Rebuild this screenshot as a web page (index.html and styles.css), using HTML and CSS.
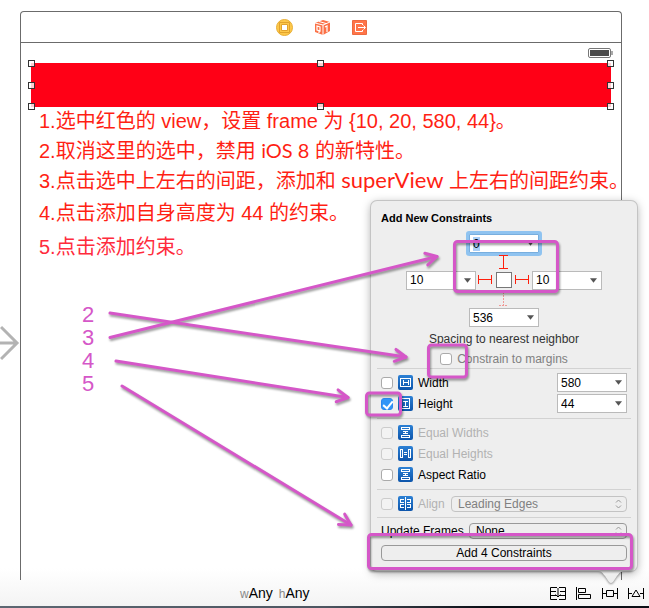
FILE: index.html
```html
<!DOCTYPE html>
<html lang="zh-CN">
<head>
<meta charset="utf-8">
<title>Add New Constraints</title>
<link rel="stylesheet" href="styles.css">
</head>
<body>
<div class="stage">
  <main class="scene">
    <svg class="entry" width="20" height="38" viewBox="0 0 20 38"><path d="M0 19h17M1 3l16 16L1 35"/></svg>
    <header class="dock">
      <svg width="17" height="17" viewBox="0 0 17 17"><circle cx="8.500" cy="8.500" r="8" fill="#fdc84a" stroke="#e8ae35"/><path d="M3.500 3.500h10v10h-10z" fill="#fdc84a" stroke="#e2a32c"/><path d="M5.500 5.500h6v6h-6z" fill="#fff" stroke="#e2a32c"/></svg>
      <svg width="17" height="17" viewBox="0 0 17 17"><path d="M1 4l8-3 7 2v9l-7 4-8-3z" fill="#fb7146"/><path d="M1 4l8 2 7-3M9 6v10M5 2.500l7 2" fill="none" stroke="#fff"/><path d="M3 7v4l3 1V8zM5 11v3M11 8l2-1v6" fill="none" stroke="#fff" stroke-width="1.200"/></svg>
      <svg width="15" height="15" viewBox="0 0 15 15"><path d="M.5.5h14v14H.5z" fill="#ff7448" stroke="#ec6a40"/><path d="M10.500 5V3.500h-7v8h7V10M6 7.500h7M11.500 5.500l2 2-2 2" fill="none" stroke="#fff"/></svg>
    </header>
    <div class="status">
      <svg width="25" height="10" viewBox="0 0 25 10"><rect x=".5" y=".5" width="22" height="9" rx="1.500" fill="#fff" stroke="#777"/><path d="M2 2h19v6H2z" fill="#4b4b4b"/><path d="M23.500 3v4h1V3z" fill="#555"/></svg>
    </div>
    <div class="red-view">
      <i class="handle tl"></i><i class="handle tc"></i><i class="handle tr"></i>
      <i class="handle ml"></i><i class="handle mr"></i>
      <i class="handle bl"></i><i class="handle bc"></i><i class="handle br"></i>
    </div>
    <div class="notes">
      <p>1.选中红色的 view，设置 frame 为 {10, 20, 580, 44}。</p>
      <p>2.取消这里的选中，禁用 <span class="geo">iOS 8</span> 的新特性。</p>
      <p>3.点击选中上左右的间距，添加和 <span class="geo wide">superView</span> 上左右的间距约束。</p>
      <p class="loose">4.点击添加自身高度为 44 的约束。</p>
      <p class="loose pinkish">5.点击添加约束。</p>
    </div>
    <div class="steps"><span>2</span><span>3</span><span>4</span><span>5</span></div>
  </main>

  <footer class="bar">
    <div class="size-class"><small>w</small>Any <small class="h">h</small>Any</div>
    <nav class="tools">
      <button aria-label="Stack"><svg viewBox="0 0 16 13"><path d="M7 .5H.5v12H7M9 .5h6.500v12H9M.5 4.500H6M.5 8.500H6M10 4.500h5.500M10 8.500h5.500M8 1v9M5.500 7.500L8 10l2.500-2.500"/></svg></button>
      <button aria-label="Align"><svg viewBox="0 0 16 13"><path d="M.5 0v13M2.500 1.500h7v4h-7zM2.500 7.500h12v4h-12z"/></svg></button>
      <button aria-label="Pin"><svg viewBox="0 0 16 13"><path d="M.5 1v11M15.500 1v11M4.500 3.500h7v6h-7zM1 6.500h3M12 6.500h3"/></svg></button>
      <button aria-label="Resolve issues"><svg viewBox="0 0 16 13"><path d="M.5 1v11M15.500 1v11M8 3l4 6.500H4zM1 6.500h3M12 6.500h3"/></svg></button>
    </nav>
  </footer>
  <div class="edge"></div>

  <form class="popover">
    <h1>Add New Constraints</h1>
    <div class="spacing">
      <div class="combo focus top"><input aria-label="Top" value="0"><svg viewBox="0 0 8 5"><path d="M0 0h8L4 5z"/></svg></div>
      <svg class="strut up" width="10" height="15" viewBox="0 0 10 15"><path d="M0 .5h9M0 13.500h9M4.500 1v12"/></svg>
      <div class="combo left"><input aria-label="Left" value="10"><svg viewBox="0 0 8 5"><path d="M0 0h8L4 5z"/></svg></div>
      <div class="center">
        <svg class="strut" width="15" height="10" viewBox="0 0 15 10"><path d="M.5 0v9M13.500 0v9M1 4.500h12"/></svg>
        <span class="box"></span>
        <svg class="strut" width="15" height="10" viewBox="0 0 15 10"><path d="M.5 0v9M13.500 0v9M1 4.500h12"/></svg>
      </div>
      <div class="combo right"><input aria-label="Right" value="10"><svg viewBox="0 0 8 5"><path d="M0 0h8L4 5z"/></svg></div>
      <svg class="strut down" width="10" height="15" viewBox="0 0 10 15"><path d="M0 13.500h9M4.500 0v13"/></svg>
      <div class="combo bottom"><input aria-label="Bottom" value="536"><svg viewBox="0 0 8 5"><path d="M0 0h8L4 5z"/></svg></div>
    </div>
    <p class="caption">Spacing to nearest neighbor</p>
    <label class="margins"><input type="checkbox">Constrain to margins</label>
    <hr>
    <section>
      <div class="row"><label><input type="checkbox"><svg class="ico" viewBox="0 0 15 15"><path d="M2.500 3.500h10v8h-10zM5 5v5M10 5v5M5 7.500h5"/></svg>Width</label>
        <div class="combo"><input aria-label="Width value" value="580"><svg viewBox="0 0 8 5"><path d="M0 0h8L4 5z"/></svg></div></div>
      <div class="row"><label><input type="checkbox" checked><svg class="ico" viewBox="0 0 15 15"><path d="M3.500 2.500h8v10h-8zM5 5h5M5 10h5M7.500 5v5"/></svg>Height</label>
        <div class="combo"><input aria-label="Height value" value="44"><svg viewBox="0 0 8 5"><path d="M0 0h8L4 5z"/></svg></div></div>
    </section>
    <hr>
    <section>
      <div class="row"><label class="off"><input type="checkbox" disabled><svg class="ico" viewBox="0 0 15 15"><path d="M3.500 2.500h8v2h-8zM3.500 10.500h8v2h-8zM5 6.500h5M5 8.500h5M7.500 6v3"/></svg>Equal Widths</label></div>
      <div class="row"><label class="off"><input type="checkbox" disabled><svg class="ico" viewBox="0 0 15 15"><path d="M2.500 3.500h2v8h-2zM10.500 3.500h2v8h-2zM6 6.500h3M6 8.500h3"/></svg>Equal Heights</label></div>
      <div class="row"><label><input type="checkbox"><svg class="ico" viewBox="0 0 15 15"><path d="M3.500 2.500h8v2h-8zM3.500 10.500h8v2h-8zM5 6.500h5M5 8.500h5M7.500 6v3"/></svg>Aspect Ratio</label></div>
    </section>
    <hr>
    <section class="single">
      <div class="row"><label class="off"><input type="checkbox" disabled><svg class="ico" viewBox="0 0 15 15"><path d="M7.500 1v13M6 3.500H2.500v3H6M9 3.500h3.500v3H9M6 8.500H2.500v3H6M9 8.500h3.500v3H9"/></svg>Align</label>
        <div class="pick align"><select aria-label="Align edges" disabled><option>Leading Edges</option></select><svg viewBox="0 0 7 10"><path d="M1 3.500L3.500 1 6 3.500M1 6.500L3.500 9 6 6.500"/></svg></div></div>
    </section>
    <hr>
    <section class="last">
      <div class="row"><label for="frames">Update Frames</label>
        <div class="pick"><select id="frames"><option>None</option></select><svg viewBox="0 0 7 10"><path d="M1 3.500L3.500 1 6 3.500M1 6.500L3.500 9 6 6.500"/></svg></div></div>
      <button type="button" class="add">Add 4 Constraints</button>
    </section>
    <svg class="tail" width="26" height="13" viewBox="0 0 26 13"><path d="M0 0h26c-4 0-5 3-7 5l-4 6q-2 2-4 0L7 5C5 3 4 0 0 0z"/></svg>
  </form>

  <svg class="marks" width="649" height="608" viewBox="0 0 649 608">
    <defs><marker id="head" markerUnits="userSpaceOnUse" markerWidth="30" markerHeight="30" refX="0" refY="0" viewBox="-15 -15 30 30" orient="auto"><path d="M-11-6L0 0l-11 6"/></marker></defs>
    <g class="arrows">
      <path d="M110 313L406 357"/>
      <path d="M110 337.500L437 256.500"/>
      <path d="M116 361L348 397.500"/>
      <path d="M122 386L351 525"/>
    </g>
    <g class="frames">
      <rect x="454.500" y="241.500" width="103" height="50" rx="3"/>
      <rect x="428.500" y="345" width="38" height="32" rx="3"/>
      <rect x="366.500" y="393" width="34" height="22" rx="3"/>
      <rect x="368.500" y="534.500" width="263" height="34" rx="3"/>
    </g>
  </svg>
</div>
</body>
</html>
```
FILE: styles.css
```css
* { box-sizing: border-box; }
body {
  margin: 0;
  background: #fff;
  font-family: "Liberation Sans", "Noto Sans CJK SC", sans-serif;
  font-size: 12px;
  color: #000;
}
.stage {
  position: relative;
  display: flex;
  flex-direction: column;
  min-height: 100vh;
  overflow: hidden;
  background: linear-gradient(to top, #f3f3f3, #fff 40px);
}
.scene {
  position: relative;
  flex: 1;
  margin: 11px 27px 0 20px;
  border: 1px solid #6b6b6b;
  border-bottom: 0;
  border-radius: 4px 4px 0 0;
}
.entry {
  position: absolute;
  left: -21px;
  top: 312px;
  fill: none;
  stroke: #b3b3b3;
  stroke-width: 3;
}
.dock {
  display: flex;
  justify-content: center;
  align-items: center;
  gap: 21px;
  height: 31px;
  border-bottom: 1px solid #6b6b6b;
}
.status {
  display: flex;
  justify-content: flex-end;
  height: 20px;
  padding: 5px 8px 0;
}
.red-view {
  position: relative;
  height: 44px;
  margin: 0 10px;
  background: #ff0016;
}
.handle {
  position: absolute;
  width: 7px;
  height: 7px;
  border: 1px solid #333;
  background: rgba(255, 255, 255, .8);
}
.tl, .tc, .tr { top: -3px; }
.ml, .mr { top: 19px; }
.bl, .bc, .br { bottom: -3px; }
.tl, .ml, .bl { left: -3px; }
.tr, .mr, .br { right: -3px; }
.tc, .bc { left: calc(50% - 4px); }
.notes {
  padding-left: 18px;
  font-size: 20px;
  line-height: 29px;
  color: #ff1f14;
  white-space: nowrap;
}
.notes p { height: 29px; margin: 0; }
.notes .loose { margin-top: 5px; }
.notes .pinkish { color: #ff2b3c; }
.geo { font-family: Lato, "Liberation Sans", sans-serif; }
.geo.wide { font-size: 22px; }
.steps {
  display: flex;
  flex-direction: column;
  margin: 41px 0 0 61px;
  font-size: 22px;
  line-height: 23px;
  color: #d557c8;
}
.bar {
  position: relative;
  display: flex;
  align-items: center;
  height: 26px;
  padding: 0 5px 0 240px;
}
.size-class { font-size: 14px; line-height: 20px; }
.size-class small { font-size: 12px; color: #888; }
.size-class .h { margin-left: 2px; }
.tools { display: flex; gap: 10px; margin-left: auto; }
.tools button {
  width: 16px;
  height: 13px;
  padding: 0;
  border: 0;
  background: none;
}
.tools svg { display: block; fill: none; stroke: #000; }
.edge { height: 2px; background: linear-gradient(to right, #5d6772, #4d5661 50%, #0a0d14 75%); }

.popover {
  position: absolute;
  right: 12px;
  bottom: 37px;
  width: 266px;
  padding: 8px 10px 10px;
  border-radius: 6px;
  background: #eee;
  box-shadow: 0 0 0 1px #c4c4c4, 0 2px 10px rgba(0, 0, 0, .35);
}
.popover h1 { margin: 0; font-size: 11px; line-height: 18px; }
.tail {
  position: absolute;
  right: 13px;
  top: 100%;
  fill: #eee;
  overflow: visible;
  filter: drop-shadow(0 1px 1px rgba(0, 0, 0, .45));
}
.spacing {
  display: grid;
  grid-template-columns: 70px 56px 70px;
  grid-template-rows: 19px 17px 20px 18px 19px;
  justify-content: center;
  align-items: center;
  justify-items: center;
  margin-top: 7px;
}
.spacing > .top, .spacing > .up, .spacing > .down, .spacing > .bottom { grid-column: 1 / 4; }
.strut { stroke: #ff1f0c; fill: none; shape-rendering: crispEdges; }
.spacing .up { align-self: end; }
.spacing .down { stroke: #f09a96; stroke-dasharray: 2 1; }
.center { display: flex; align-items: center; gap: 3px; }
.box { width: 16px; height: 16px; border: 1px solid #777; background: #fff; }
.combo {
  display: flex;
  align-items: center;
  width: 70px;
  height: 19px;
  padding-right: 4px;
  border: 1px solid #bababa;
  background: #fff;
}
.combo input {
  flex: 1;
  min-width: 0;
  padding: 0 3px;
  border: 0;
  outline: 0;
  background: none;
  font: inherit;
}
.combo svg { width: 7px; height: 5px; fill: #555; }
.combo.focus { border-color: #78aede; border-radius: 1px; box-shadow: 0 0 0 3px #8fc3f0; }
.combo.focus input {
  background: linear-gradient(#a9cff7, #a9cff7) 3px 0 / 7px 14px no-repeat;
}
.caption {
  margin: 4px 0 0;
  line-height: 16px;
  text-align: center;
  color: #333;
}
.margins {
  display: flex;
  align-items: center;
  justify-content: center;
  gap: 5px;
  margin-top: 4px;
  line-height: 16px;
  color: #808080;
}
input[type="checkbox"] {
  appearance: none;
  flex: none;
  width: 12px;
  height: 12px;
  margin: 0;
  border: 1px solid #aaa;
  border-radius: 3px;
  background: #fff;
}
input[type="checkbox"]:disabled { border-color: #ccc; background: #f3f3f3; }
input[type="checkbox"]:checked {
  border-color: #2b87ef;
  background: #3296f7;
  position: relative;
}
input[type="checkbox"]:checked::after {
  content: "";
  position: absolute;
  left: 3px;
  top: 0;
  width: 4px;
  height: 8px;
  border: solid #fff;
  border-width: 0 2px 2px 0;
  transform: rotate(40deg);
}
hr { margin: 1px -4px 0; border: 0; border-top: 1px solid #d2d2d2; }
section { padding: 3px 0; }
.row { display: flex; align-items: center; justify-content: space-between; height: 21px; }
.row label { display: flex; align-items: center; gap: 5px; }
.ico {
  width: 15px;
  height: 15px;
  border-radius: 2px;
  background: linear-gradient(#2c80d4, #0d55ab);
  fill: none;
  stroke: #fff;
  shape-rendering: crispEdges;
}
.row .off { color: #b2b2b2; }
.single { padding: 3px 0 2px; }
.last { padding: 2px 0 0; }
.pick { position: relative; width: 158px; }
.pick.align { width: 176px; }
.pick select {
  display: block;
  appearance: none;
  width: 100%;
  height: 16px;
  padding: 0 6px;
  border: 1px solid #999;
  border-radius: 4px;
  background: transparent;
  font: inherit;
  line-height: 14px;
  color: #000;
}
.pick select:disabled { border-color: #c3c3c3; color: #808080; opacity: 1; }
.pick svg {
  position: absolute;
  right: 5px;
  top: 3px;
  width: 7px;
  height: 10px;
  fill: none;
  stroke: #999;
}
.add {
  display: block;
  width: 100%;
  height: 16px;
  margin-top: 4px;
  padding: 0;
  border: 1px solid #999;
  border-radius: 4px;
  background: transparent;
  font: inherit;
  line-height: 14px;
}
.marks {
  position: absolute;
  left: 0;
  top: 0;
  pointer-events: none;
  fill: none;
  stroke: #d557c8;
  stroke-width: 3;
  stroke-linecap: round;
  stroke-linejoin: round;
  filter: drop-shadow(1px 2px 1px rgba(0, 0, 0, .4));
}
.arrows path { marker-end: url(#head); }
```
